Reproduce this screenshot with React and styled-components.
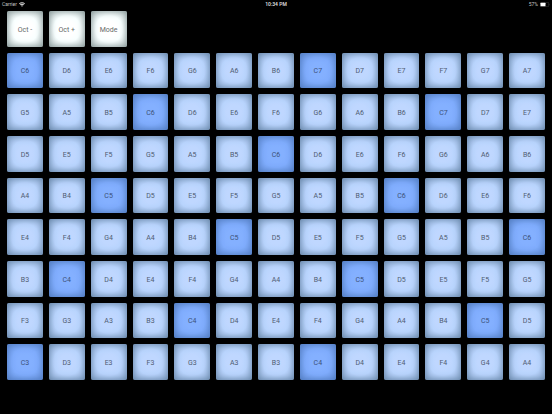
import React from "react";
import styled, { createGlobalStyle } from "styled-components";

const GlobalStyle = createGlobalStyle`
  * { box-sizing: border-box; }
  body {
    margin: 0;
    background: #000;
    font-family: Roboto, "Liberation Sans", sans-serif;
  }
`;

const Screen = styled.div`
  display: flex;
  flex-direction: column;
  min-height: 100vh;
  padding-bottom: 34px;
  background: #000;
`;

const StatusBar = styled.header`
  display: grid;
  grid-template-columns: 1fr auto 1fr;
  align-items: center;
  height: 8px;
  margin-bottom: 3px;
  padding: 0 2px;
  color: #c4c4c4;
  font-size: 5px;
  line-height: 8px;
`;

const StatusGroup = styled.div`
  display: flex;
  align-items: center;
  justify-content: ${({ $end }) => ($end ? "flex-end" : "flex-start")};
  gap: 2px;
`;

const Clock = styled.time`
  color: #dedede;
  font-weight: 600;
`;

const WifiIcon = styled.svg`
  display: block;
  width: 6px;
  height: 5px;
`;

const BatteryIcon = styled.svg`
  display: block;
  width: 10px;
  height: 5px;
`;

const PadGrid = styled.main`
  flex: 1;
  display: grid;
  grid-template-columns: repeat(13, minmax(0, 1fr));
  grid-auto-rows: minmax(24px, 1fr);
  gap: 6px;
  padding: 0 7px;
`;

const tones = {
  control: { center: "#ffffff", mid: "#f8ffff", edge: "#c4d0d0", shade: "#849494" },
  note: { center: "#bfd7ff", mid: "#b9d4fd", edge: "#94b1d8", shade: "#6584a6" },
  root: { center: "#84b0ff", mid: "#80adfd", edge: "#6a95e0", shade: "#4f7abe" },
};

const Pad = styled.button`
  grid-column-start: ${({ $first }) => ($first ? 1 : "auto")};
  display: flex;
  align-items: center;
  justify-content: center;
  min-width: 0;
  margin: 0;
  padding: 2px 0 0;
  border: 0;
  border-radius: 2px;
  background: radial-gradient(
    circle closest-side,
    ${({ $tone }) => tones[$tone].center} 40%,
    ${({ $tone }) => tones[$tone].mid} 75%,
    ${({ $tone }) => tones[$tone].edge} 130%
  );
  box-shadow: inset 0 0 7px ${({ $tone }) => tones[$tone].shade};
  color: ${({ $tone }) => ($tone === "control" ? "#666969" : $tone === "root" ? "#3c5178" : "#4f5c72")};
  font-family: inherit;
  font-size: 7px;
  line-height: 8px;
  white-space: nowrap;
  cursor: pointer;
`;

const CONTROLS = ["Oct -", "Oct +", "Mode"];
const SCALE = ["C", "D", "E", "F", "G", "A", "B"];
const COLUMNS = 13;
const ROWS = 8;
const ROW_INTERVAL = 3;
const BASE_OCTAVE = 3;

const pads = Array.from({ length: ROWS * COLUMNS }, (_, index) => {
  const row = ROWS - 1 - Math.floor(index / COLUMNS);
  const column = index % COLUMNS;
  const step = row * ROW_INTERVAL + column;
  return {
    id: `${row}-${column}`,
    first: column === 0,
    root: step % SCALE.length === 0,
    label: SCALE[step % SCALE.length] + (BASE_OCTAVE + Math.floor(step / SCALE.length)),
  };
});

export default function App() {
  return (
    <>
      <GlobalStyle />
      <Screen>
        <StatusBar>
          <StatusGroup>
            <span>Carrier</span>
            <WifiIcon viewBox="0 0 12 10" role="img" aria-label="Wi-Fi">
              <g fill="none" stroke="#d8d8d8" strokeWidth="2.1">
                <path d="M0.7 3.6C3.7.6 8.3.6 11.3 3.6" />
                <path d="M2.7 5.8C4.6 4 7.4 4 9.3 5.8" />
              </g>
              <path d="M4 7.4Q6 5.8 8 7.4L6 9.6Z" fill="#d8d8d8" />
            </WifiIcon>
          </StatusGroup>
          <Clock>10:34 PM</Clock>
          <StatusGroup $end>
            <span>57%</span>
            <BatteryIcon viewBox="0 0 20 10" role="img" aria-label="Battery">
              <rect x="0.5" y="0.5" width="17" height="9" rx="2.5" fill="none" stroke="#4c4c4c" />
              <rect x="1" y="1.5" width="10" height="7" rx="1" fill="#fff" />
              <path d="M18.6 3.3Q20 5 18.6 6.7Z" fill="#4c4c4c" />
            </BatteryIcon>
          </StatusGroup>
        </StatusBar>
        <PadGrid>
          {CONTROLS.map((label) => (
            <Pad key={label} type="button" $tone="control">
              {label}
            </Pad>
          ))}
          {pads.map(({ id, first, root, label }) => (
            <Pad key={id} type="button" $first={first} $tone={root ? "root" : "note"}>
              {label}
            </Pad>
          ))}
        </PadGrid>
      </Screen>
    </>
  );
}
